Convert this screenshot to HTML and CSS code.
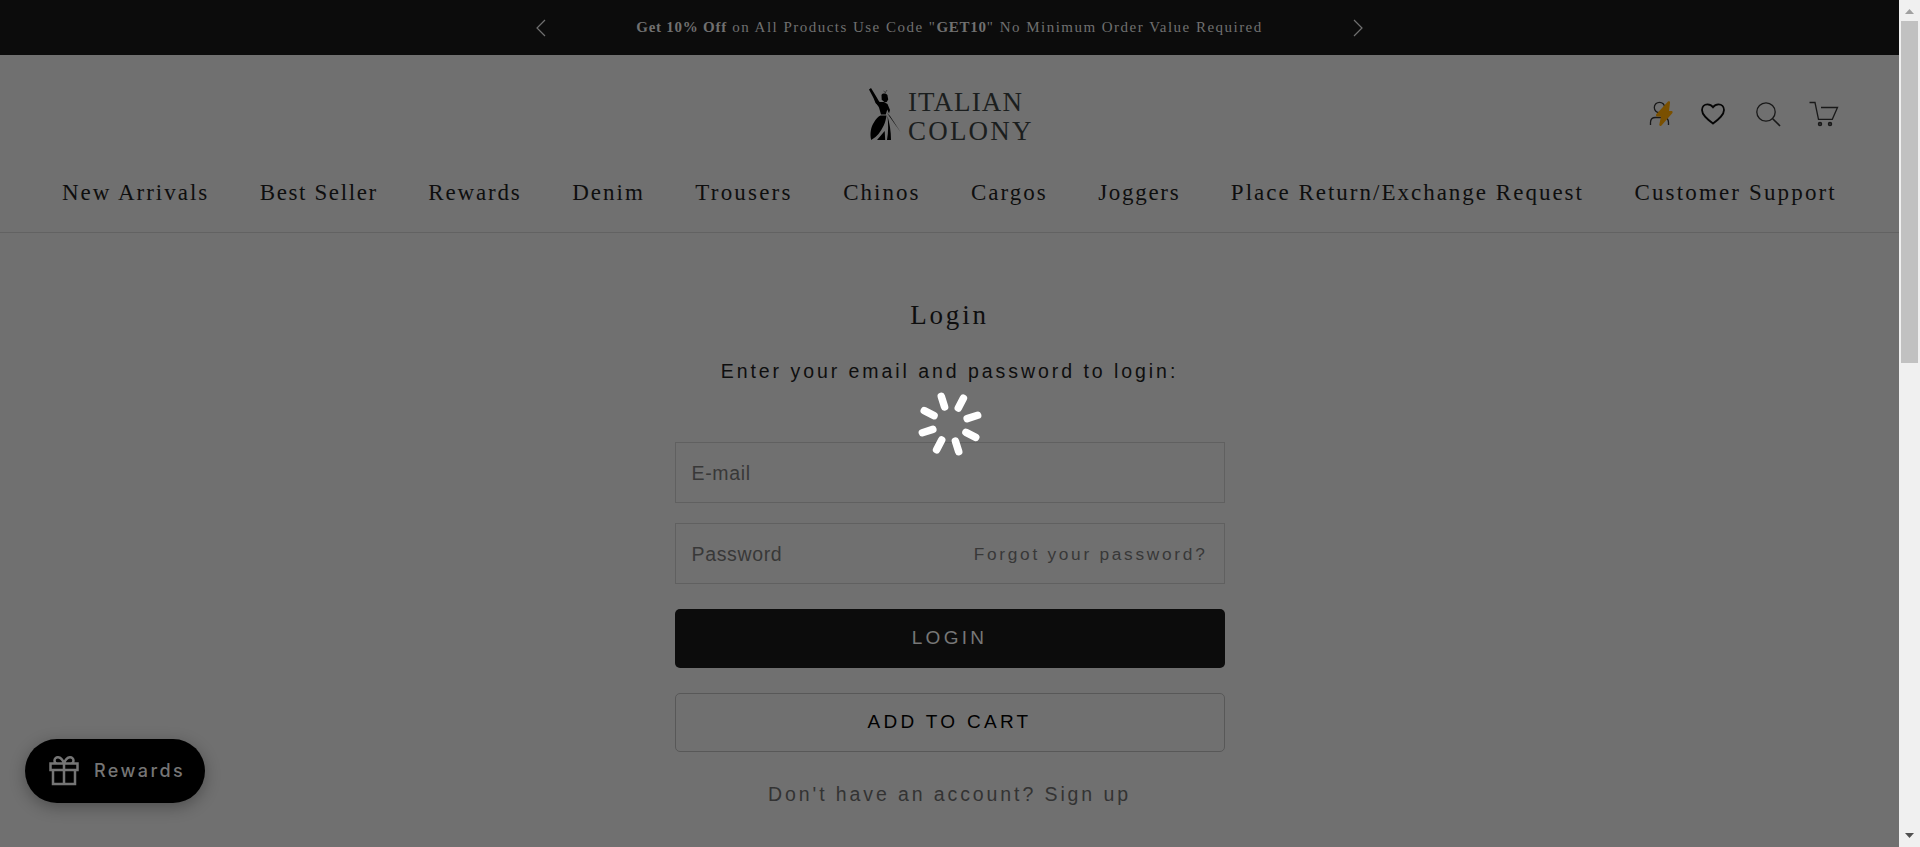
FILE: index.html
```html
<!DOCTYPE html>
<html lang="en">
<head>
<meta charset="utf-8">
<title>Login – Italian Colony</title>
<link rel="stylesheet" href="styles.css">
</head>
<body>
<div class="window">
<div class="page">
  <div class="announcement">
    <svg class="arrow" width="10" height="18" viewBox="0 0 10 18"><path d="M9 1 1 9l8 8"/></svg>
    <p class="announcement-text"><b>Get 10% Off</b> on All Products Use Code "<b>GET10</b>" No Minimum Order Value Required</p>
    <svg class="arrow" width="10" height="18" viewBox="0 0 10 18"><path d="m1 1 8 8-8 8"/></svg>
  </div>
  <header class="header">
    <div class="header-top">
      <a class="logo">
        <svg width="36" height="56" viewBox="0 0 36 56">
          <path d="M1 2.500 3 1l5.500 9 4 7-2 2-3-3-2-5z"/>
          <path d="m19 26 3 3 10.500 16z"/>
          <path d="M13.500 8c1-2 5-2 6 .5l.7 4-1.500 2.500-2 .3-3-2.500z"/>
          <path d="m15.500 4 2 1.500M19 3l-2 3" stroke="#222" stroke-width=".6"/>
          <path d="m9 14 3 1h4l3.500 2 2.500 6-1 3.500-1.700-4-1.500 5H13l-2-7-3-5z"/>
          <path d="M12.500 28.500h6c-1 8-4 13-8 18.500L7.500 50l-4.300 3c-1.500-6-.5-13 3-18 2-3 3.800-5.500 6.300-6.500z"/>
          <path d="M19.500 29c2 7 3.500 15 3.500 24h-4c1.500-8 1.300-16 .5-24zM16.700 44l.5 9H9z"/>
        </svg>
        <span class="logo-words"><span class="word-a">ITALIAN</span><span class="word-b">COLONY</span></span>
      </a>
      <div class="tools">
        <svg width="24" height="26" viewBox="0 0 24 26"><g class="thin"><circle cx="10.500" cy="6.500" r="5.200"/><path d="M1.500 24v-2.500c0-3 2-5 5-5h8c3 0 5 2 5 5V24"/></g><path class="bolt" d="M19 .5c1-.8 2.200-.2 2 1.200L20 10h2.300c1.300 0 1.700 1.200.9 2.200L12.500 24.500c-1 1.100-2.500.4-2.200-1L12 15.500H8.300c-1.300 0-1.800-1.400-.8-2.400z"/></svg>
        <svg width="24" height="22" viewBox="0 0 24 22"><path class="heart" d="M12 20.500C6 16 1 12 1 7c0-3.400 2.400-5.700 5.400-5.700 2.500 0 4.400 1.200 5.600 2.900 1.200-1.700 3.100-2.900 5.600-2.900 3 0 5.400 2.300 5.400 5.700 0 5-5 9-11 13.500z"/></svg>
        <svg width="25" height="25" viewBox="0 0 25 25"><g class="thin"><circle cx="10" cy="10" r="9.200"/><path d="m16.700 16.700 7.300 7.300" stroke-width="1.600"/></g></svg>
        <svg width="30" height="26" viewBox="0 0 30 26"><g class="thin"><path d="M.5 1.500H6l3.500 16.800h13.800l5.200-11.800H12"/><circle cx="11" cy="23" r="1.400" stroke-width="1.700"/><circle cx="21" cy="23" r="1.400" stroke-width="1.700"/></g></svg>
      </div>
    </div>
    <nav class="nav">
      <a>New Arrivals</a><a>Best Seller</a><a>Rewards</a><a>Denim</a><a>Trousers</a><a>Chinos</a><a>Cargos</a><a>Joggers</a><a>Place Return/Exchange Request</a><a>Customer Support</a>
    </nav>
  </header>
  <main class="login">
    <h1 class="title">Login</h1>
    <p class="lead">Enter your email and password to login:</p>
    <div class="field"><span>E-mail</span></div>
    <div class="field"><span>Password</span><a class="forgot">Forgot your password?</a></div>
    <div class="button primary">LOGIN</div>
    <div class="button outline">ADD TO CART</div>
    <p class="signup">Don't have an account? Sign up</p>
  </main>
</div>
<div class="scrollbar">
  <svg width="21" height="21" viewBox="0 0 21 21"><path d="m10.500 9 4.500 5H6z" fill="#a0a0a0"/></svg>
  <div class="thumb"></div>
  <svg width="21" height="21" viewBox="0 0 21 21"><path d="m10.500 12 4.500-5H6z" fill="#505050"/></svg>
</div>
</div>
<svg class="spinner" viewBox="-34 -34 68 68">
  <g transform="rotate(-17.500)">
    <path d="M0-29v11"/>
    <path d="M0-29v11" transform="rotate(45)"/><path d="M0-29v11" transform="rotate(90)"/><path d="M0-29v11" transform="rotate(135)"/><path d="M0-29v11" transform="rotate(180)"/><path d="M0-29v11" transform="rotate(225)"/><path d="M0-29v11" transform="rotate(270)"/><path d="M0-29v11" transform="rotate(315)"/>
  </g>
</svg>
<div class="rewards">
  <svg width="30" height="30" viewBox="0 0 30 30"><path d="M1.500 7.500h27v6.500h-27zM4 14h22v14H4zM15 7.500V28M15 7.500C12-1 5.500.5 5.500 4.500c0 1.500 1 3 2.500 3M15 7.500c3-8.500 9.500-7 9.500-3 0 1.500-1 3-2.500 3"/></svg>
  <span>Rewards</span>
</div>
</body>
</html>
```
FILE: styles.css
```css
* { box-sizing: border-box; }
body { margin: 0; height: 847px; overflow: hidden; background: #707070; color: #0e0e0e; font-family: "Liberation Sans", Arial, sans-serif; }
p, h1 { margin: 0; }
.window { display: flex; height: 847px; }
.page { width: 1899px; }
.announcement { height: 55px; background: #0c0c0c; color: #707070; display: flex; align-items: center; justify-content: center; gap: 84px; }
.arrow { fill: none; stroke: #707070; stroke-width: 1.2; }
.announcement-text { width: 639px; padding-bottom: 1px; text-align: center; font: 15px/20px "Liberation Serif", serif; letter-spacing: 1.48px; white-space: nowrap; }
.announcement-text b { letter-spacing: .75px; }
.header { height: 178px; border-bottom: 1px solid #626262; }
.header-top { height: 117px; position: relative; display: flex; justify-content: center; padding-top: 32px; }
.logo { display: flex; gap: 4px; height: 56px; margin-left: 3px; }
.logo svg { fill: #000; }
.logo-words { width: 126px; display: flex; flex-direction: column; font: 27px/29px "Liberation Serif", serif; color: #1b1e1e; padding-top: 1px; }
.word-a { letter-spacing: 1.1px; }
.word-b { letter-spacing: 2.2px; }
.tools { position: absolute; right: 60px; top: 46px; display: flex; align-items: center; gap: 28px; height: 26px; }
.tools svg { display: block; }
.tools svg:nth-child(2) { margin-right: 3px; }
.thin { fill: none; stroke: #191919; stroke-width: 1.3; }
.heart { fill: none; stroke: #050505; stroke-width: 1.8; }
.bolt { fill: #7a5000; }
.nav { display: flex; justify-content: space-between; padding: 6px 62px 0 62px; font: 23px/30px "Liberation Serif", serif; letter-spacing: 2px; white-space: nowrap; }
.nav a:nth-child(2) { letter-spacing: 1.6px; }
.nav a:nth-child(3) { letter-spacing: 1.85px; }
.nav a:nth-child(5) { letter-spacing: 2.2px; }
.nav a:nth-child(8) { letter-spacing: 1.7px; }
.nav a:nth-child(10) { letter-spacing: 2.15px; }
.login { width: 550px; margin: 0 auto; padding-top: 63px; text-align: center; }
.title { font: 27px/36px "Liberation Serif", serif; letter-spacing: 2.8px; padding-top: 1px; }
.lead { margin-top: 26px; font-size: 19.5px; line-height: 24px; letter-spacing: 2.95px; white-space: nowrap; }
.field { height: 61px; border: 1px solid #606060; display: flex; align-items: center; justify-content: space-between; padding: 1px 16px 0; font-size: 19.5px; letter-spacing: .65px; color: #383838; margin-bottom: 20px; }
.lead + .field { margin-top: 59px; }
.forgot { font-size: 17.3px; letter-spacing: 2.72px; }
.button { height: 59px; border-radius: 5px; display: flex; align-items: center; justify-content: center; font-size: 19px; letter-spacing: 3.3px; padding-bottom: 2px; }
.primary { background: #0c0c0c; color: #777; margin: 25px 0; }
.outline { border: 1px solid #585858; color: #000; }
.signup { margin-top: 30px; font-size: 19.5px; line-height: 24px; letter-spacing: 2.9px; color: #333; }
.scrollbar { width: 21px; background: #f0f0f0; display: flex; flex-direction: column; }
.scrollbar svg { display: block; }
.thumb { height: 342px; width: 17px; margin: 0 2px 463px; background: #c1c1c1; }
.spinner { position: absolute; left: 916px; top: 390px; width: 68px; height: 68px; fill: none; stroke: #fff; stroke-width: 7.5; stroke-linecap: round; }
.rewards { position: absolute; left: 25px; top: 739px; width: 180px; height: 64px; border-radius: 32px; background: #000; color: #757575; display: flex; align-items: center; padding-left: 24px; gap: 15px; font: 500 18px/24px Inter, sans-serif; letter-spacing: 2.4px; box-shadow: 0 4px 16px rgba(0,0,0,.3); }
.rewards svg { fill: none; stroke: #757575; stroke-width: 2.5; }
```
